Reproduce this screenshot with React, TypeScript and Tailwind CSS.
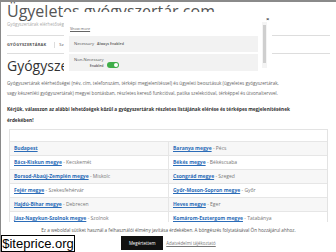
const rows: [string, string, string, string][] = [
  ["Budapest", "", "Baranya megye", "Pécs"],
  ["Bács-Kiskun megye", "Kecskemét", "Békés megye", "Békéscsaba"],
  ["Borsod-Abaúj-Zemplén megye", "Miskolc", "Csongrád megye", "Szeged"],
  ["Fejér megye", "Szekesfehérvár", "Győr-Moson-Sopron megye", "Győr"],
  ["Hajdú-Bihar megye", "Debrecen", "Heves megye", "Eger"],
  ["Jász-Nagykun-Szolnok megye", "Szolnok", "Komárom-Esztergom megye", "Tatabánya"],
  ["Nógrád megye", "Salgótarján", "Pest megye", ""],
];

function Cell({ link, city }: { link: string; city: string }) {
  return (
    <div className="flex-1 px-[4px] flex items-center">
      <a className="text-[#2b6cb8] font-bold underline">{link}</a>
      {city && <span className="text-[#777]">&nbsp;- {city}</span>}
    </div>
  );
}

export default function App() {
  return (
    <div
      className="relative w-[336px] h-[252px] overflow-hidden bg-white border-t-2 border-l border-[#8a8a8a]"
      style={{ fontFamily: '"Open Sans", sans-serif' }}
    >
      <div className="px-[6px]">
        <h1 className="text-[16px] leading-[18px] text-[#555]">Ügyeletes gyógyszertár.com</h1>
        <p className="text-[4.4px] leading-[6px] text-[#aaa] mt-[1px]">Gyógyszertárak elérhetőségei</p>

        <div className="mt-[8px] h-[19px] border-y border-[#ddd] flex items-center text-[4px] font-bold text-[#555] tracking-[0.2px]">
          <span>GYÓGYSZERTÁRAK</span>
          <span className="ml-[8px] pl-[4px] border-l border-[#ddd] font-normal">Sz</span>
        </div>

        <h2 className="mt-[4px] text-[14px] leading-[16px] text-[#333]">Gyógyszertárak</h2>

        <p className="mt-[4px] text-[4.6px] leading-[10px] text-[#666]">
          Gyógyszertárak elérhetőségei (név, cím, telefonszám, térképi megjelenítéssel) és ügyeleti beosztásuk (ügyeletes gyógyszertárak,
          <br />
          vagy készenléti gyógyszertárak) megyei bontásban, részletes kereső funkcióval, patika szelekcióval, térképpel és útvonaltervvel.
        </p>

        <p className="mt-[6px] text-[4.7px] leading-[10.5px] font-bold text-[#333]">
          Kérjük, válasszon az alábbi lehetőségek közül a gyógyszertárak részletes listájának elérése és térképes megjelenítésének
          <br />
          érdekében!
        </p>

        <div className="mt-[4px] mx-[2px] border border-[#e3e3e3] pt-[11px] text-[5px]">
          {rows.map((r, i) => (
            <div
              key={i}
              className={`flex h-[14px] border-t border-[#e6e6e6] ${i % 2 === 0 ? "bg-[#f7f7f7]" : "bg-white"}`}
            >
              <Cell link={r[0]} city={r[1]} />
              <div className="w-px bg-[#e6e6e6]" />
              <Cell link={r[2]} city={r[3]} />
            </div>
          ))}
        </div>
      </div>

      {/* cookie settings modal */}
      <div className="absolute left-[63px] top-[10px] w-[208px] h-[61px] bg-white">
        <div className="absolute left-[6px] top-[14px] text-[3.8px] text-[#666] underline">Show more</div>
        <div className="absolute left-[5px] top-[24px] w-[189px] h-[16px] bg-[#f2f2f2] flex items-center pl-[5px] text-[4.2px] text-[#555]">
          Necessary
          <span className="ml-[3px] text-[3.6px] font-semibold text-[#555]">Always Enabled</span>
        </div>
        <div className="absolute left-[5px] top-[42px] w-[189px] h-[17px] bg-[#f2f2f2] flex items-center pl-[5px] text-[4.2px] text-[#555]">
          <div className="flex flex-col items-end leading-[5.5px]">
            <span>Non-Necessary</span>
            <span className="text-[3.6px] font-semibold">Enabled</span>
          </div>
          <div className="ml-[3px] mt-[4px] w-[12px] h-[6px] rounded-full bg-[#3fae49] flex items-center justify-end pr-[1px]">
            <div className="w-[4px] h-[4px] rounded-full bg-white" />
          </div>
        </div>
        <div className="absolute left-[198px] top-[10px] w-[5px] h-[46px] bg-[#f4f4f4]">
          <div className="mx-auto mt-[3px] w-[3px] h-[38px] bg-[#cfcfcf]" />
        </div>
        <div className="absolute left-[202px] top-[4px] text-[6px] leading-[6px] font-bold text-[#333]">×</div>
      </div>

      {/* cookie bar */}
      <div className="absolute left-0 right-0 bottom-0 h-[30px] bg-white flex flex-col items-center pt-[4px]">
        <p className="text-[4.6px] leading-[8px] text-[#555]">
          Ez a weboldal sütiket használ a felhasználói élmény javítása érdekében. A böngészés folytatásával Ön hozzájárul ahhoz.
        </p>
        <div className="mt-[2px] flex items-center gap-[3px]">
          <button className="w-[42px] h-[14px] bg-[#111] text-white text-[4.4px]">Megértettem</button>
          <a className="text-[4.4px] text-[#777] underline">Adatvédelmi tájékoztató</a>
        </div>
      </div>

      {/* watermark */}
      <div
        className="absolute left-0 bottom-0 w-[74px] h-[17px] bg-white border border-black flex items-center justify-center text-[13px] leading-[15px] text-black"
        style={{ fontFamily: '"Liberation Sans", sans-serif' }}
      >
        $iteprice.org
      </div>
    </div>
  );
}
